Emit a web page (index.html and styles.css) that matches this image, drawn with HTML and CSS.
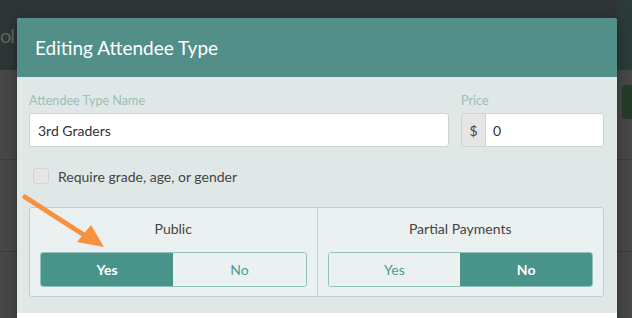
FILE: index.html
```html
<!DOCTYPE html>
<html>
<head>
<meta charset="utf-8">
<link rel="stylesheet" href="styles.css">
</head>
<body>
<div class="page">
  <div class="topbar"></div>
  <div class="subhead">
    <span class="subhead-text">ol</span>
    <span class="subhead-right"></span>
  </div>
  <div class="content">
    <div class="row row-first"><span class="green-btn"></span></div>
    <div class="row"></div>
    <div class="row"></div>
  </div>
</div>

<div class="modal">
  <div class="modal-header">
    <h4 class="modal-title">Editing Attendee Type</h4>
  </div>
  <div class="modal-body">
    <div class="field-row">
      <div class="field">
        <label class="field-label">Attendee Type Name</label>
        <div class="input">3rd Graders</div>
      </div>
      <div class="field">
        <label class="field-label">Price</label>
        <div class="input-group">
          <span class="addon">$</span>
          <div class="input input-grouped">0</div>
        </div>
      </div>
    </div>
    <label class="check-row">
      <span class="checkbox"></span>
      <span class="check-text">Require grade, age, or gender</span>
    </label>
    <div class="toggle-panel">
      <div class="toggle-col">
        <div class="toggle-title">Public</div>
        <div class="btn-group">
          <span class="btn btn-on">Yes</span>
          <span class="btn btn-off">No</span>
        </div>
      </div>
      <div class="toggle-col toggle-col-right">
        <div class="toggle-title">Partial Payments</div>
        <div class="btn-group">
          <span class="btn btn-off">Yes</span>
          <span class="btn btn-on">No</span>
        </div>
      </div>
    </div>
  </div>
  <div class="modal-footer"></div>
</div>

<svg class="arrow" width="120" height="70" viewBox="0 0 120 70">
  <line x1="25" y1="12" x2="84" y2="50" stroke="#f7913d" stroke-width="5" stroke-linecap="round"/>
  <polygon points="104,62 77,57 91,40" fill="#f7913d"/>
</svg>
</body>
</html>
```
FILE: styles.css
```css
* { box-sizing: border-box; }
html, body {
  margin: 0;
  padding: 0;
  width: 632px;
  height: 318px;
  overflow: hidden;
  font-family: Lato, "Open Sans", sans-serif;
}
body { background: #474747; }

.page { display: flex; flex-direction: column; height: 318px; }
.topbar { height: 18px; background: #1e2d2c; }
.subhead {
  height: 70px;
  background: #2e3534;
  display: flex;
  align-items: center;
  justify-content: space-between;
}
.subhead-text {
  margin-left: 0;
  font-size: 20px;
  letter-spacing: -1px;
  color: #5f6665;
}
.subhead-right { width: 15px; height: 70px; background: #2b3b3a; }
.content { flex: 1; background: #474747; }
.row { height: 92px; border-bottom: 1px solid #3c3c3c; }
.row-first { height: 90px; display: flex; justify-content: flex-end; padding-top: 15px; }
.green-btn {
  width: 10px;
  height: 34px;
  background: #263b27;
  border-radius: 4px 0 0 4px;
}

.modal {
  position: absolute;
  left: 17px;
  top: 18px;
  width: 600px;
  background: #dfe8e6;
  border-radius: 3px 3px 0 0;
  box-shadow: 0 3px 12px rgba(0,0,0,0.35);
}
.modal-header {
  height: 59px;
  background: #528f88;
  border-radius: 3px 3px 0 0;
  display: flex;
  align-items: center;
  padding-left: 18px;
}
.modal-title {
  margin: 0;
  font-weight: 400;
  font-size: 19px;
  color: #ffffff;
}
.modal-body { padding: 16px 13px 16px 12px; }
.modal-footer { height: 20px; background: #ffffff; }

.field-row { display: grid; grid-template-columns: 420px 143px; column-gap: 12px; }
.field { display: flex; flex-direction: column; }
.field-label {
  font-size: 12.6px;
  line-height: 16px;
  color: #9ebdb8;
  margin-bottom: 4px;
}
.input {
  height: 34px;
  background: #ffffff;
  border: 1px solid #cfd4d3;
  border-radius: 3px;
  padding: 0 8px;
  display: flex;
  align-items: center;
  font-size: 14px;
  color: #333;
}
.input-group { display: flex; height: 34px; }
.addon {
  width: 24px;
  background: #e5e5e5;
  border: 1px solid #cfd4d3;
  border-right: none;
  border-radius: 3px 0 0 3px;
  display: flex;
  align-items: center;
  justify-content: center;
  font-size: 14px;
  color: #444;
}
.input-grouped { flex: 1; border-radius: 0 3px 3px 0; padding-left: 7px; }

.check-row {
  display: flex;
  align-items: center;
  margin: 21px 0 0 4px;
  height: 16px;
}
.checkbox {
  width: 16px;
  height: 16px;
  background: #e4e6e5;
  border: 1px solid #cfd3d2;
  border-radius: 3px;
}
.check-text {
  margin-left: 9px;
  font-size: 14px;
  color: #444;
}

.toggle-panel {
  margin-top: 23px;
  height: 90px;
  background: #ebf0f0;
  border: 1px solid #bcd0cd;
  border-radius: 3px;
  display: grid;
  grid-template-columns: 1fr 1fr;
}
.toggle-col { padding: 0 10px 0 10px; display: flex; flex-direction: column; }
.toggle-col-right { border-left: 1px solid #bcd0cd; }
.toggle-title {
  text-align: center;
  font-size: 14px;
  color: #444;
  margin-top: 10px;
  height: 22px;
  line-height: 22px;
}
.btn-group {
  margin-top: 12px;
  display: grid;
  grid-template-columns: 1fr 1fr;
  height: 35px;
  border: 1px solid #94c2bb;
  border-radius: 3px;
  overflow: hidden;
}
.btn {
  display: flex;
  align-items: center;
  justify-content: center;
  font-size: 14px;
}
.btn-on { background: #48938a; color: #ffffff; font-weight: 700; }
.btn-off { background: #ebf1f0; color: #4f9a91; }

.arrow {
  position: absolute;
  left: 0;
  top: 185px;
}
```
